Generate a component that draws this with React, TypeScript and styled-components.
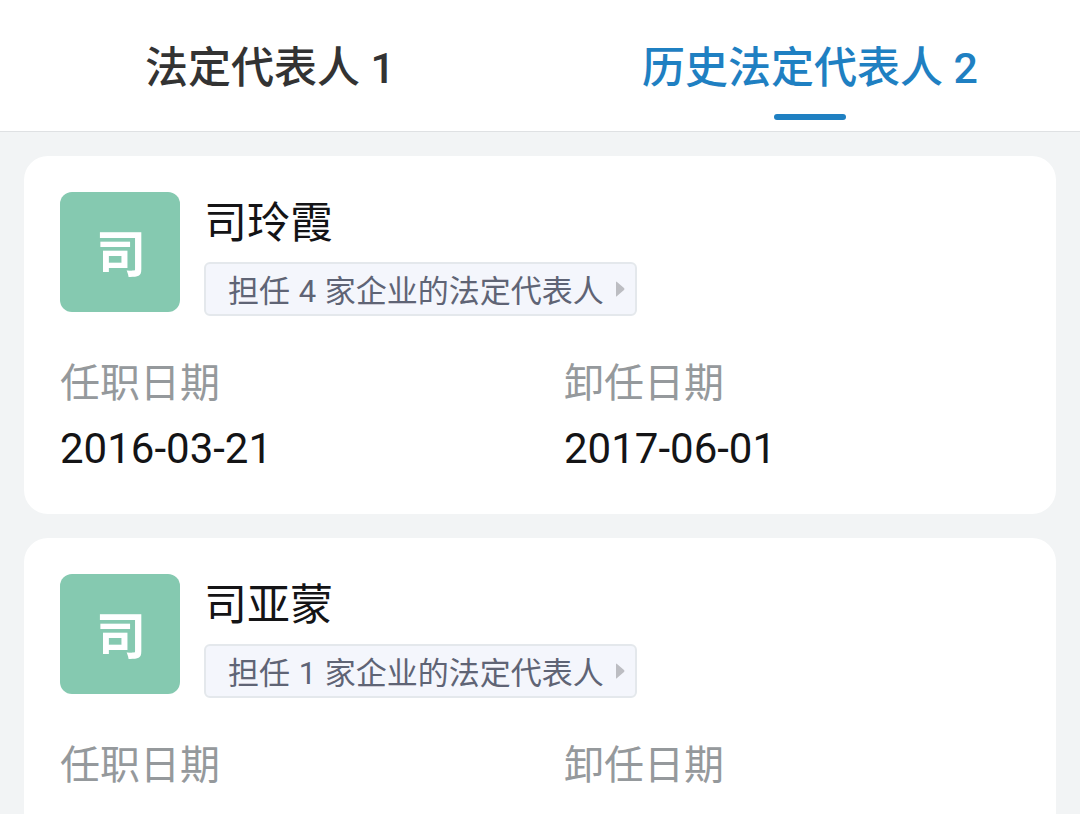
import React, { useState } from "react";
import styled, { createGlobalStyle } from "styled-components";

const GlobalStyle = createGlobalStyle`
  * { box-sizing: border-box; }
  html, body, #root { height: 100%; }
  body {
    margin: 0;
    overflow: hidden;
    background: #f2f4f5;
    color: #141416;
    font-family: Roboto, "Noto Sans CJK SC", sans-serif;
  }
  button { font-family: inherit; border: 0; cursor: pointer; }
`;

const Page = styled.div`
  height: 100%;
  overflow: hidden;
`;

const TabBar = styled.div`
  display: grid;
  grid-template-columns: 1fr 1fr;
  height: 132px;
  background: #fff;
  border-bottom: 1px solid #dfe1e3;
`;

const Tab = styled.button<{ $active: boolean }>`
  display: flex;
  flex-direction: column;
  align-items: center;
  padding: 36px 0 0;
  background: none;
  color: ${(p) => (p.$active ? "#1f80c2" : "#333333")};
  font-size: 43px;
  line-height: 64px;
  font-weight: 500;
  white-space: nowrap;

  &::after {
    content: "";
    width: 72px;
    height: 6px;
    margin-top: 14px;
    border-radius: 3px;
    background: ${(p) => (p.$active ? "#1f80c2" : "transparent")};
  }
`;

const List = styled.main`
  display: flex;
  flex-direction: column;
  gap: 24px;
  padding: 24px;
`;

const Card = styled.article`
  padding: 36px 36px 38px;
  border-radius: 24px;
  background: #fff;
`;

const Person = styled.div`
  display: flex;
  gap: 24px;
  height: 124px;
`;

const Avatar = styled.div`
  display: flex;
  align-items: center;
  justify-content: center;
  width: 120px;
  height: 120px;
  padding: 0 0 4px 2px;
  border-radius: 12px;
  background: #85c9b0;
  color: #fff;
  font-size: 50px;
  font-weight: 700;
`;

const Info = styled.div`
  display: flex;
  flex-direction: column;
  align-items: flex-start;
`;

const Name = styled.h2`
  margin: 0 0 8px;
  font-size: 43px;
  line-height: 62px;
  font-weight: 400;
`;

const Tag = styled.button`
  display: flex;
  align-items: center;
  gap: 12px;
  height: 54px;
  padding: 0 10px 0 22px;
  border: 2px solid #e4e8ec;
  border-radius: 6px;
  background: #f4f6fc;
  color: #5f6475;
  font-size: 31px;
  white-space: nowrap;
`;

const TagText = styled.span`
  padding-top: 6px;
  line-height: 44px;
`;

const Count = styled.span`
  padding: 0 1px;
`;

const Dates = styled.dl`
  display: grid;
  grid-template-columns: 1fr 1fr;
  gap: 48px;
  margin: 38px 0 0;
`;

const Term = styled.dt`
  color: #95999c;
  font-size: 40px;
  line-height: 60px;
`;

const Value = styled.dd`
  margin: 8px 0 0;
  font-size: 42px;
  line-height: 54px;
`;

const Arrow = () => (
  <svg width="9" height="16" viewBox="0 0 9 16" aria-hidden="true">
    <path d="M0 1Q0 0 1 1L8 7Q9 8 8 9L1 15Q0 16 0 15Z" fill="#bcbdc2" />
  </svg>
);

const tabs = ["法定代表人 1", "历史法定代表人 2"];

const people = [
  { name: "司玲霞", companies: 4, start: "2016-03-21", end: "2017-06-01" },
  { name: "司亚蒙", companies: 1, start: "2015-08-25", end: "2016-03-21" },
];

export default function App() {
  const [active, setActive] = useState(1);
  return (
    <Page>
      <GlobalStyle />
      <TabBar role="tablist">
        {tabs.map((label, i) => (
          <Tab key={label} role="tab" aria-selected={i === active} $active={i === active} onClick={() => setActive(i)}>
            {label}
          </Tab>
        ))}
      </TabBar>
      <List>
        {people.map((p) => (
          <Card key={p.name}>
            <Person>
              <Avatar>{p.name[0]}</Avatar>
              <Info>
                <Name>{p.name}</Name>
                <Tag>
                  <TagText>
                    担任 <Count>{p.companies}</Count> 家企业的法定代表人
                  </TagText>
                  <Arrow />
                </Tag>
              </Info>
            </Person>
            <Dates>
              <div>
                <Term>任职日期</Term>
                <Value>{p.start}</Value>
              </div>
              <div>
                <Term>卸任日期</Term>
                <Value>{p.end}</Value>
              </div>
            </Dates>
          </Card>
        ))}
      </List>
    </Page>
  );
}
